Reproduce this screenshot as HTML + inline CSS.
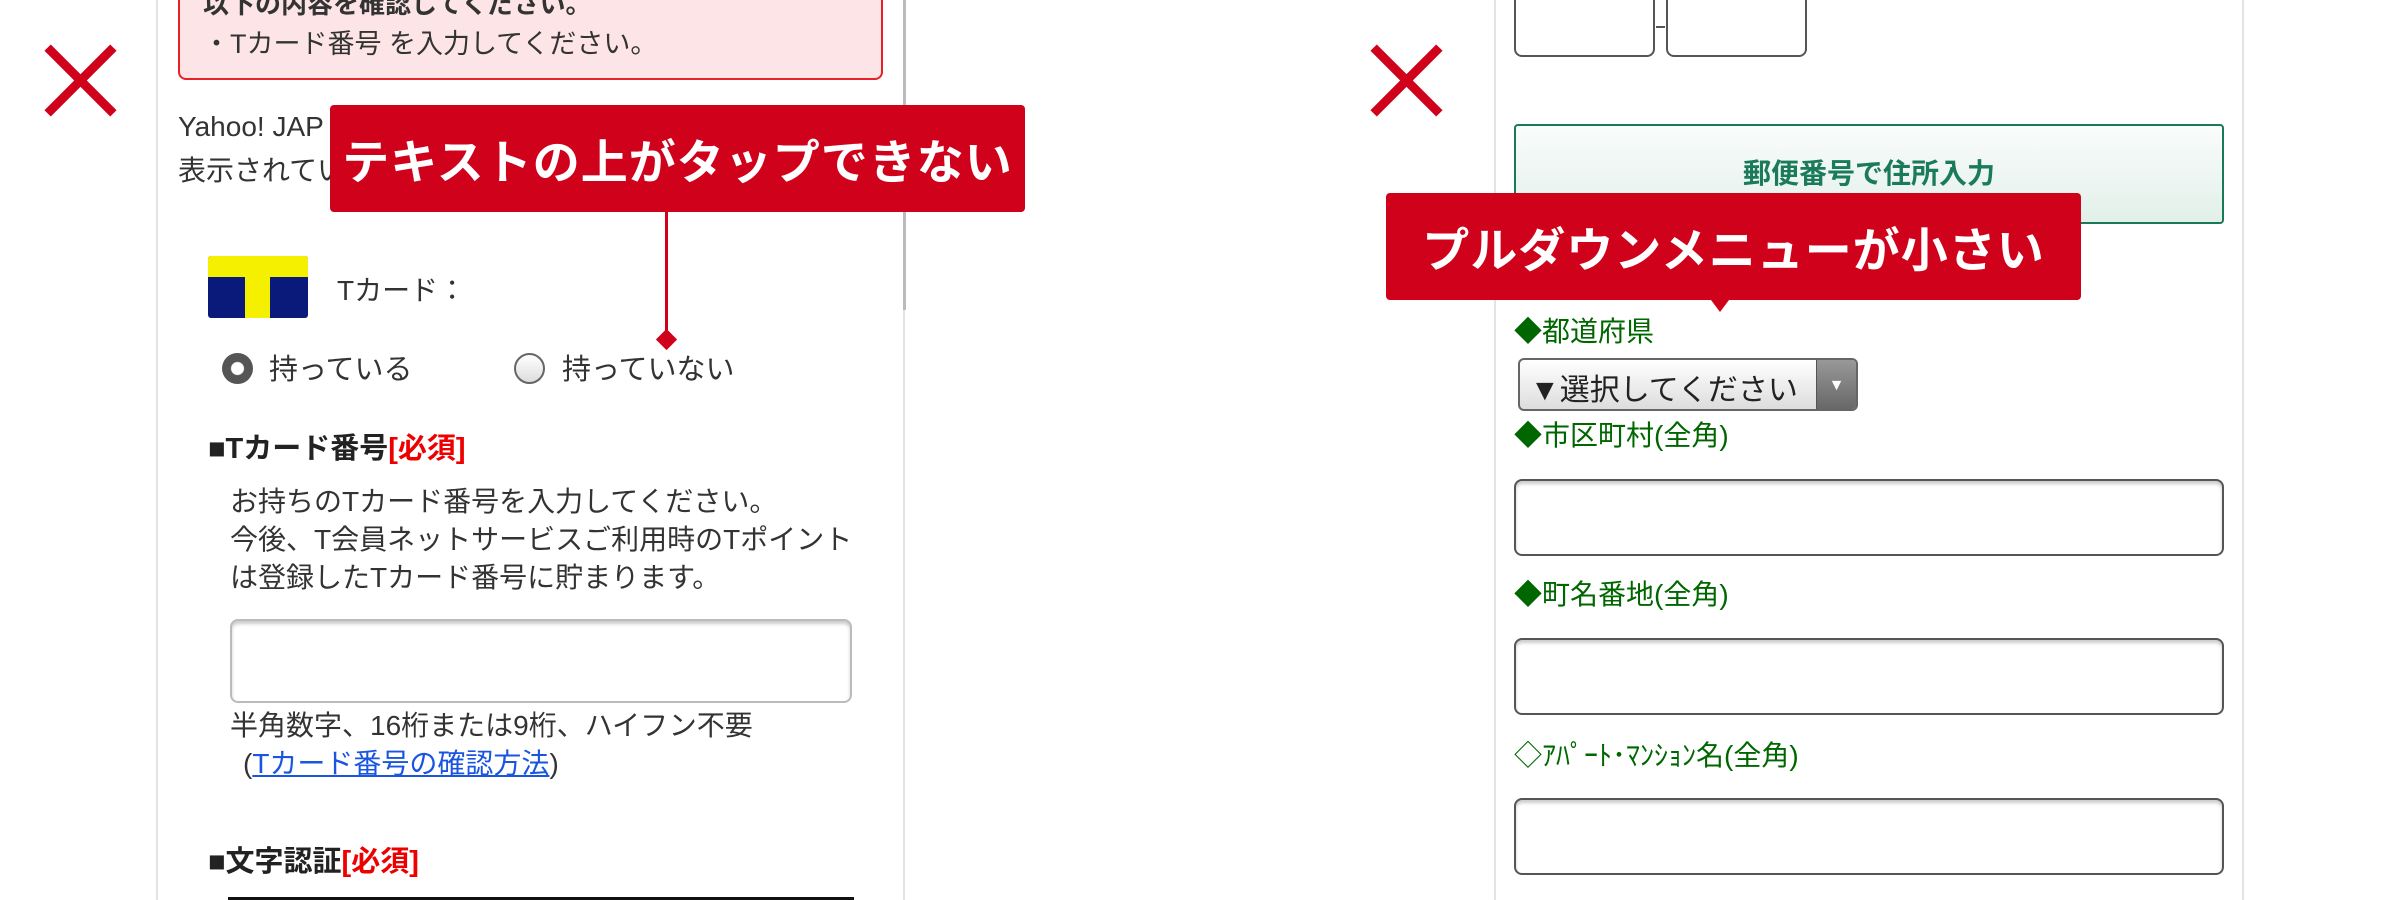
<!DOCTYPE html>
<html><head><meta charset="utf-8"><style>
*{margin:0;padding:0;box-sizing:border-box}
body{width:2400px;height:900px;background:#fff;position:relative;overflow:hidden;font-family:"Liberation Sans","Noto Sans CJK JP",sans-serif;color:#333}
.a{position:absolute;white-space:nowrap}
.x{position:absolute;width:77px;height:75px}
.x:before,.x:after{content:"";position:absolute;left:-8px;top:33px;width:93px;height:9px;background:#d0021b;transform:rotate(45deg)}
.x:after{transform:rotate(-45deg)}
.call{position:absolute;background:#d0021b;color:#fff;font-weight:bold;border-radius:4px;font-size:47px;display:flex;align-items:center;justify-content:center;letter-spacing:1px}
.inp{position:absolute;border:2px solid #555;border-radius:8px;background:#fff;box-shadow:inset 0 3px 3px #ccc}
.g{color:#006600;font-size:28px}
</style></head><body>
<div class="a" style="left:156px;top:0;width:2px;height:900px;background:#e4e4e4"></div>
<div class="a" style="left:903px;top:0;width:2px;height:900px;background:#e4e4e4"></div>
<div class="a" style="left:903px;top:0;width:3px;height:310px;background:#bbb"></div>
<div class="x" style="left:42px;top:43px"></div>
<div class="a" style="left:178px;top:-10px;width:705px;height:90px;background:#fde4e6;border:2px solid #e8202a;border-radius:8px"></div>
<div class="a" style="left:203px;top:-16px;font-size:26px;font-weight:bold;color:#333">以下の内容を確認してください。</div>
<div class="a" style="left:203px;top:22px;font-size:27px">・Tカード番号 を入力してください。</div>
<div class="a" style="left:178px;top:111px;font-size:28px">Yahoo! JAP</div>
<div class="a" style="left:178px;top:149px;font-size:28px">表示されている</div>
<div class="call" style="left:330px;top:105px;width:695px;height:107px">テキストの上がタップできない</div>
<div class="a" style="left:665px;top:212px;width:3px;height:128px;background:#d0021b"></div>
<div class="a" style="left:659px;top:332px;width:15px;height:15px;background:#d0021b;transform:rotate(45deg)"></div>
<div class="a" style="left:208px;top:256px;width:100px;height:62px;background:#0a1a7a;border-radius:3px;overflow:hidden">
 <div class="a" style="left:0;top:0;width:100px;height:21px;background:#f5ef00"></div>
 <div class="a" style="left:37px;top:0;width:25px;height:62px;background:#f5ef00"></div>
</div>
<div class="a" style="left:337px;top:269px;font-size:28px">Tカード：</div>
<div class="a" style="left:222px;top:353px;width:31px;height:31px;border-radius:50%;background:radial-gradient(circle,#fff 0 6px,#555 7px 100%)"></div>
<div class="a" style="left:269px;top:346px;font-size:29px">持っている</div>
<div class="a" style="left:514px;top:353px;width:31px;height:31px;border-radius:50%;border:2px solid #666;background:linear-gradient(#fff,#ddd)"></div>
<div class="a" style="left:562px;top:346px;font-size:29px">持っていない</div>
<div class="a" style="left:208px;top:425px;font-size:29px;font-weight:bold;color:#222">■Tカード番号<span style="color:#e00">[必須]</span></div>
<div class="a" style="left:230px;top:483px;font-size:28px;line-height:38px">お持ちのTカード番号を入力してください。<br>今後、T会員ネットサービスご利用時のTポイント<br>は登録したTカード番号に貯まります。</div>
<div class="inp" style="left:230px;top:619px;width:622px;height:84px;border-color:#bbb"></div>
<div class="a" style="left:230px;top:704px;font-size:28px">半角数字、16桁または9桁、ハイフン不要</div>
<div class="a" style="left:243px;top:742px;font-size:28px">(<span style="color:#1a55e0;text-decoration:underline">Tカード番号の確認方法</span>)</div>
<div class="a" style="left:208px;top:838px;font-size:29px;font-weight:bold;color:#222">■文字認証<span style="color:#e00">[必須]</span></div>
<div class="a" style="left:228px;top:897px;width:626px;height:3px;background:#111"></div>
<div class="a" style="left:1494px;top:0;width:2px;height:900px;background:#e4e4e4"></div>
<div class="a" style="left:2242px;top:0;width:2px;height:900px;background:#e4e4e4"></div>
<div class="x" style="left:1368px;top:43px"></div>
<div class="a" style="left:1514px;top:-10px;width:141px;height:67px;border:2px solid #555;border-radius:8px"></div>
<div class="a" style="left:1656px;top:26px;width:9px;height:2px;background:#555"></div>
<div class="a" style="left:1666px;top:-10px;width:141px;height:67px;border:2px solid #555;border-radius:8px"></div>
<div class="a" style="left:1514px;top:124px;width:710px;height:100px;border:2px solid #1a7a55;border-radius:4px;background:linear-gradient(#fafcfb,#e2f0ea)"></div>
<div class="a" style="left:1514px;top:152px;width:710px;text-align:center;font-size:28px;font-weight:bold;color:#1b7a5a">郵便番号で住所入力</div>
<div class="call" style="left:1386px;top:193px;width:695px;height:107px">プルダウンメニューが小さい</div>
<div class="a" style="left:1708px;top:296px;width:0;height:0;border-left:12px solid transparent;border-right:12px solid transparent;border-top:16px solid #d0021b"></div>
<div class="a g" style="left:1514px;top:310px">◆都道府県</div>
<div class="a" style="left:1518px;top:358px;width:340px;height:53px;border:2px solid #666;border-radius:6px;background:linear-gradient(#fff,#ddd);overflow:hidden">
 <div class="a" style="left:10px;top:5px;font-size:30px;color:#222">▼選択してください</div>
 <div class="a" style="right:0;top:0;width:40px;height:51px;background:linear-gradient(#999,#666);border-left:1px solid #555;color:#fff;font-size:16px;text-align:center;line-height:51px">▼</div>
</div>
<div class="a g" style="left:1514px;top:414px">◆市区町村(全角)</div>
<div class="inp" style="left:1514px;top:479px;width:710px;height:77px"></div>
<div class="a g" style="left:1514px;top:573px">◆町名番地(全角)</div>
<div class="inp" style="left:1514px;top:638px;width:710px;height:77px"></div>
<div class="a g" style="left:1514px;top:734px;font-size:28px">◇ｱﾊﾟｰﾄ･ﾏﾝｼｮﾝ名(全角)</div>
<div class="inp" style="left:1514px;top:798px;width:710px;height:77px"></div>
</body></html>
